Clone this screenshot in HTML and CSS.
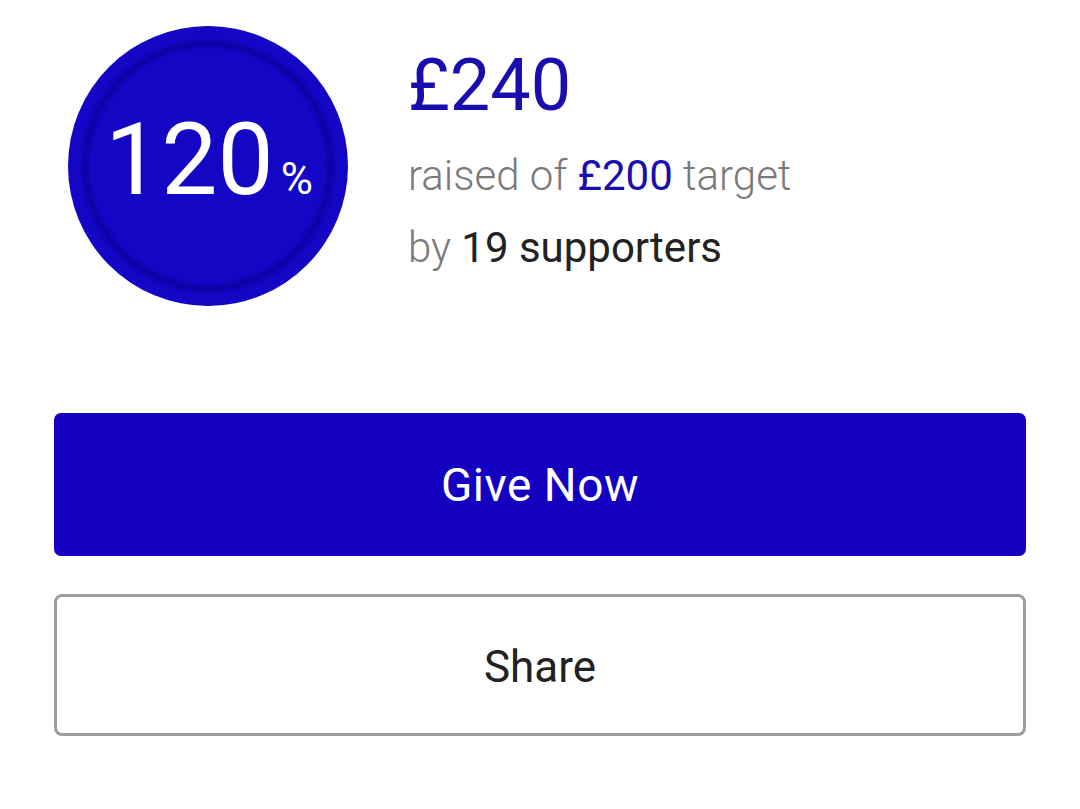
FILE: index.html
```html
<!DOCTYPE html>
<html>

<head>
    <meta content="width=device-width, initial-scale=1" name="viewport" />
    <link rel="stylesheet" href="styles.css">
</head>

<body>
    <div class="page">
        <div class="summary">
            <div class="badge">
                <div class="badgeRing">
                    <div class="badgeText">
                        <span class="badgeNum">120</span><span class="badgePct">%</span>
                    </div>
                </div>
            </div>
            <div class="totals">
                <div class="raised">£240</div>
                <div class="target">raised of <span class="targetAmt">£200</span> target</div>
                <div class="supporters">by <span class="supCount">19 supporters</span></div>
            </div>
        </div>
        <div class="actions">
            <button class="btn btnGive">Give Now</button>
            <button class="btn btnShare">Share</button>
        </div>
    </div>
</body>

</html>
```

FILE: styles.css
```css
html,
body {
    margin: 0;
    background: #ffffff;
    font-family: Roboto, "Liberation Sans", sans-serif;
}

.page {
    padding: 26px 54px 0 54px;
}

.summary {
    display: flex;
    flex-direction: row;
    align-items: flex-start;
}

/* big blue circle with the darker ring inside */
.badge {
    width: 280px;
    height: 280px;
    margin-left: 14px;
    border-radius: 50%;
    background-color: #1306c4;
    display: flex;
    justify-content: center;
    align-items: center;
    flex-shrink: 0;
}

.badgeRing {
    width: 250px;
    height: 250px;
    border-radius: 50%;
    border: 5px solid #0e02a8;
    box-shadow: 0 0 3px rgba(8, 0, 120, 0.6), inset 0 0 3px rgba(8, 0, 120, 0.6);
    box-sizing: border-box;
    display: flex;
    justify-content: center;
    align-items: center;
    color: #ffffff;
}

.badgeText {
    display: flex;
    align-items: baseline;
    margin-top: -12px;
    margin-left: 2px;
}

.badgeNum {
    font-size: 100px;
    line-height: 1;
}

.badgePct {
    font-size: 44px;
    margin-left: 7px;
}

.totals {
    margin-left: 60px;
    padding-top: 24px;
}

.raised {
    font-size: 72px;
    line-height: 72px;
    color: #1a0db0;
}

.target {
    margin-top: 18px;
    font-size: 42px;
    line-height: 72px;
    font-weight: 300;
    color: #7a7a7a;
}

.targetAmt {
    color: #1a0db0;
    font-weight: 400;
}

.supporters {
    font-size: 42px;
    line-height: 72px;
    font-weight: 300;
    color: #7a7a7a;
}

.supCount {
    color: #222222;
    font-weight: 400;
}

.actions {
    display: flex;
    flex-direction: column;
    gap: 38px;
    margin-top: 107px;
}

.btn {
    width: 100%;
    height: 143px;
    font-family: Roboto, "Liberation Sans", sans-serif;
    font-size: 44px;
    border-radius: 7px;
    cursor: pointer;
}

.btnGive {
    background-color: #1400c0;
    color: #ffffff;
    border: none;
    font-size: 46px;
    letter-spacing: 0.5px;
    padding-top: 2px;
}

.btnShare {
    height: 142px;
    padding-top: 4px;
    background-color: #ffffff;
    color: #222222;
    border: 3px solid #9e9e9e;
    border-radius: 8px;
}
```
